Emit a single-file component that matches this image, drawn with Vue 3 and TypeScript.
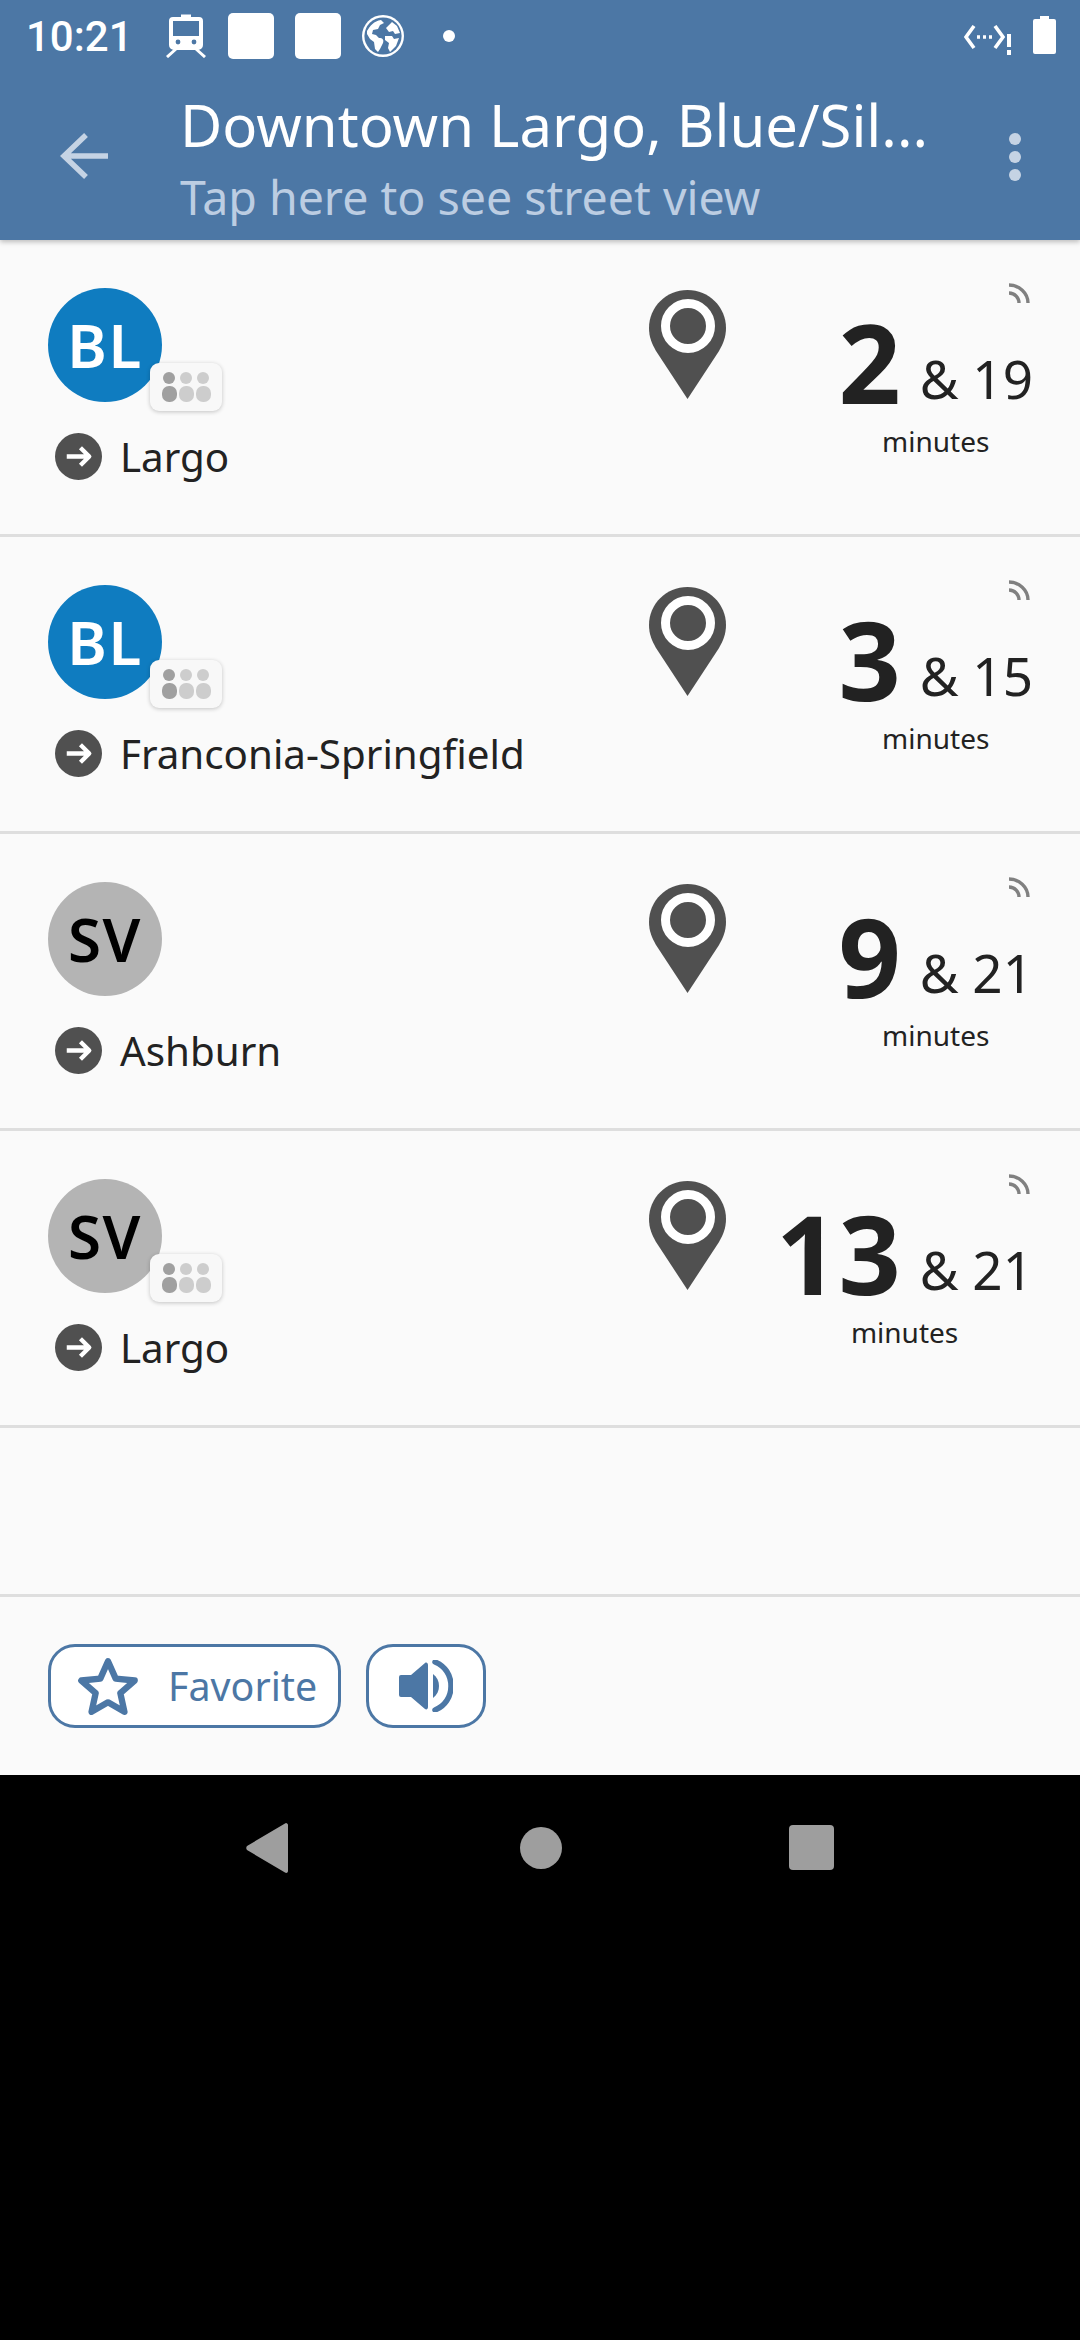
<script setup lang="ts">
interface Row { code: string; dest: string; first: string; next: string; chip: boolean; color: string; ink: string }
const rows: Row[] = [
  { code: 'BL', dest: 'Largo', first: '2', next: '19', chip: true, color: '#0f7cc0', ink: '#fff' },
  { code: 'BL', dest: 'Franconia-Springfield', first: '3', next: '15', chip: true, color: '#0f7cc0', ink: '#fff' },
  { code: 'SV', dest: 'Ashburn', first: '9', next: '21', chip: false, color: '#b4b4b4', ink: '#000' },
  { code: 'SV', dest: 'Largo', first: '13', next: '21', chip: true, color: '#b4b4b4', ink: '#000' },
]
</script>

<template>
  <div class="screen">
    <header class="top">
      <div class="status">
        <span class="clock">10:21</span>
        <svg class="st train" viewBox="0 0 42 44" fill="none" stroke="#fff" stroke-width="4">
          <path d="M16 2h10" stroke-width="3" />
          <path d="M8 5h26a2 2 0 0 1 2 2v24a3 3 0 0 1-3 3H9a3 3 0 0 1-3-3V7a2 2 0 0 1 2-2z" />
          <path d="M7 22h28v10a2 2 0 0 1-2 2H9a2 2 0 0 1-2-2z" fill="#fff" stroke="none" />
          <circle cx="13" cy="28" r="2.4" fill="#4c77a5" stroke="none" />
          <circle cx="29" cy="28" r="2.4" fill="#4c77a5" stroke="none" />
          <path d="M11 35 2 43M31 35l9 8" stroke-width="3" />
        </svg>
        <i class="block"></i>
        <i class="block"></i>
        <svg class="st globe" viewBox="0 0 42 42">
          <circle cx="21" cy="21" r="21" fill="#fff" />
          <circle cx="21" cy="21" r="18.6" fill="#4c77a5" />
          <path d="M5 16c3-5 7-10 14-11l3 3-4 2-2 4-5 1-1 4 4 1 3 3c4 0 5 2 4 5l-3 6-2 3-3-3-1-7-4-3-3-5zM24 13l6-6 5 4 3 7-5 1-2-3-4 1zM23 21h7l2 3 5-1-3 8-6 6-2-4 1-5-4-3z" fill="#fff" />
        </svg>
        <i class="pip"></i>
        <span class="push"></span>
        <svg class="st net" viewBox="0 0 49 30" fill="none" stroke="#fff" stroke-width="3.6">
          <path d="M10 1 2 12l8 11M31 1l8 11-8 11" />
          <path d="M13 12h3M19 12h3M25 12h3" />
          <path d="M45 9v13M45 25v5" stroke-width="4" />
        </svg>
        <svg class="st batt" viewBox="0 0 23 38">
          <path d="M7 0h9v3h5a2 2 0 0 1 2 2v31a2 2 0 0 1-2 2H2a2 2 0 0 1-2-2V5a2 2 0 0 1 2-2h5z" fill="#fff" />
        </svg>
      </div>
      <div class="bar">
        <svg class="back" viewBox="0 0 48 46" fill="none" stroke="#c5d3e4" stroke-width="5.5">
          <path d="M48 23H4M26 2 4 23l22 21" />
        </svg>
        <div class="titles">
          <div class="title">Downtown Largo, Blue/Sil...</div>
          <div class="sub">Tap here to see street view</div>
        </div>
        <div class="dots"><i></i><i></i><i></i></div>
      </div>
    </header>

    <main class="list">
      <section v-for="(r, i) in rows" :key="i" class="row">
        <div class="left">
          <div class="avatar" :style="{ background: r.color, color: r.ink }">
            {{ r.code }}
            <div v-if="r.chip" class="chip">
              <i class="s dark"></i><i class="s"></i><i class="s"></i>
              <i class="l dark"></i><i class="l"></i><i class="l"></i>
            </div>
          </div>
          <div class="dest">
            <svg class="go" viewBox="0 0 48 48">
              <circle cx="24" cy="24" r="24" fill="#505050" />
              <path d="M12 24h23M26 15l9 9-9 9" fill="none" stroke="#fff" stroke-width="4.4" stroke-linejoin="round" />
            </svg>
            <span>{{ r.dest }}</span>
          </div>
        </div>
        <svg class="pin" viewBox="0 0 77 109">
          <path d="M38.5 0C17 0 0 17 0 38c0 9 3 16 7 23l31.500 48L70 61c4-7 7-14 7-23C77 17 60 0 38.500 0z" fill="#505050" />
          <circle cx="39" cy="36" r="22.500" fill="none" stroke="#fff" stroke-width="9" />
        </svg>
        <div class="times">
          <svg class="signal" viewBox="0 0 22 20" fill="none" stroke="#808080" stroke-width="3.400">
            <path d="M1 2c10 0 19 8 19 18M1 10c6 0 10 5 10 10" />
          </svg>
          <div class="eta">
            <div class="nums"><b>{{ r.first }}</b><span>&amp; {{ r.next }}</span></div>
            <div class="unit">minutes</div>
          </div>
        </div>
      </section>
      <div class="gap"></div>
    </main>

    <footer class="actions">
      <button class="btn fav">
        <svg viewBox="2 2 56 55" class="star">
          <path d="M30 6l7.300 16.500 18 1.800-13.600 12 3.900 17.700L30 45 14.400 54l3.900-17.700-13.600-12 18-1.800z" fill="none" stroke="#4c77a5" stroke-width="6" stroke-linejoin="round" />
        </svg>
        <span>Favorite</span>
      </button>
      <button class="btn snd">
        <svg viewBox="0 0 54 52" class="speaker">
          <path d="M2 15h10L26 3c1.500-1 3 0 3 2v42c0 2-1.500 3-3 2L12 37H2a2 2 0 0 1-2-2V17a2 2 0 0 1 2-2z" fill="#4c77a5" />
          <path d="M34 14c4 3 6 7 6 12s-2 9-6 12z" fill="#4c77a5" />
          <path d="M36 2c10 4 16 13 16 24s-6 20-16 24" fill="none" stroke="#4c77a5" stroke-width="5.500" stroke-linecap="round" />
        </svg>
      </button>
    </footer>

    <nav class="navbar">
      <svg class="tri" viewBox="0 0 42 50"><path d="M40 0c1 0 2 1 2 2v46c0 2-2 2.500-3 1.500L1 27c-1-1-1-3 0-4L39 .500z" fill="#9e9e9e" /></svg>
      <i class="home"></i>
      <i class="recent"></i>
    </nav>
  </div>
</template>

<style scoped>
.screen { width: 1080px; height: 2340px; display: flex; flex-direction: column; background: #000; font-family: "Noto Sans", sans-serif; color: #222; overflow: hidden; }
.top { background: #4c77a5; height: 240px; flex: none; box-shadow: 0 2px 5px rgba(0,0,0,.25); position: relative; z-index: 1; }
.status { height: 72px; display: flex; align-items: center; padding: 0 24px 0 26px; color: #fff; }
.clock { font: 500 42px Roboto, sans-serif; width: 139px; }
.st { display: block; flex: none; }
.train { width: 42px; height: 44px; margin-right: 21px; }
.block { width: 46px; height: 46px; background: #fff; border-radius: 5px; margin-right: 21px; display: block; }
.globe { width: 42px; height: 42px; margin-right: 39px; }
.pip { width: 12px; height: 12px; border-radius: 50%; background: #fff; display: block; }
.push { flex: 1; }
.net { width: 49px; height: 30px; margin: 8px 20px 0 0; }
.batt { width: 23px; height: 38px; margin-top: -2px; }
.bar { height: 168px; display: flex; align-items: flex-start; padding-left: 60px; }
.back { width: 48px; height: 46px; margin-top: 61px; flex: none; }
.titles { margin-left: 72px; width: 826px; flex: none; }
.title { font-size: 58px; line-height: 70px; color: #fff; margin-top: 18px; white-space: nowrap; }
.sub { font-size: 46.5px; line-height: 58px; margin-top: 8px; color: #bccde2; white-space: nowrap; }
.dots { margin-left: 3px; margin-top: 61px; display: flex; flex-direction: column; gap: 6px; flex: none; }
.dots i { display: block; width: 12px; height: 12px; border-radius: 50%; background: #c5d3e4; }
.list { background: #fafafa; flex: none; display: flex; flex-direction: column; }
.row { height: 294px; border-bottom: 3px solid #dedede; display: grid; grid-template-columns: 601px 77px 1fr; padding: 0 47px 0 48px; }
.left { padding-top: 48px; }
.avatar { width: 114px; height: 114px; border-radius: 50%; position: relative; display: flex; align-items: center; justify-content: center; font-size: 60px; font-weight: 600; letter-spacing: 1.5px; }
.chip { position: absolute; left: 102px; top: 75px; width: 72px; height: 48px; background: #f8f8f8; border-radius: 9px; box-shadow: 0 1px 4px rgba(0,0,0,.22); display: grid; grid-template-columns: repeat(3, 16px); grid-auto-rows: min-content; justify-content: center; align-content: center; gap: 2px 1px; }
.chip i { display: block; justify-self: center; background: #cdcdcd; border-radius: 50%; }
.chip .s { width: 12px; height: 12px; }
.chip .l { width: 15px; height: 16px; border-radius: 7px; }
.chip .dark { background: #a0a0a0; }
.dest { display: flex; align-items: center; margin: 30px 0 0 7px; height: 48px; font-size: 40.3px; color: #222; white-space: nowrap; }
.go { width: 47px; height: 47px; margin-right: 18px; flex: none; }
.pin { width: 77px; height: 109px; margin-top: 50px; }
.times { position: relative; display: flex; justify-content: flex-end; }
.signal { position: absolute; right: 3px; top: 43px; width: 22px; height: 20px; }
.eta { margin-top: 77px; display: flex; flex-direction: column; align-items: center; }
.nums { height: 100px; line-height: 100px; white-space: nowrap; }
.nums b { display: inline-block; font-size: 109px; font-weight: 700; line-height: 90px; color: #222; }
.nums span { display: inline-block; font-size: 53px; line-height: 50px; margin-left: 19px; vertical-align: 5px; }
.unit { font-size: 28px; line-height: 34px; margin-top: 7px; }
.gap { height: 166px; }
.actions { height: 178px; flex: none; border-top: 3px solid #dedede; background: #fafafa; display: flex; align-items: center; gap: 25px; padding-left: 48px; }
.btn { height: 84px; box-sizing: border-box; border: 3px solid #4c77a5; border-radius: 27px; background: #fff; display: flex; align-items: center; padding: 0; color: #4c77a5; font: 400 39.400px "Noto Sans", sans-serif; }
.fav { width: 293px; padding-left: 27px; }
.star { width: 60px; height: 58px; margin-right: 30px; flex: none; }
.snd { width: 120px; justify-content: center; }
.speaker { width: 54px; height: 52px; }
.navbar { flex: 1; background: #000; position: relative; }
.tri { position: absolute; left: 246px; top: 48px; width: 42px; height: 50px; }
.home { position: absolute; left: 520px; top: 52px; width: 42px; height: 42px; border-radius: 50%; background: #9e9e9e; }
.recent { position: absolute; left: 789px; top: 50px; width: 45px; height: 45px; border-radius: 4px; background: #9e9e9e; }
</style>
